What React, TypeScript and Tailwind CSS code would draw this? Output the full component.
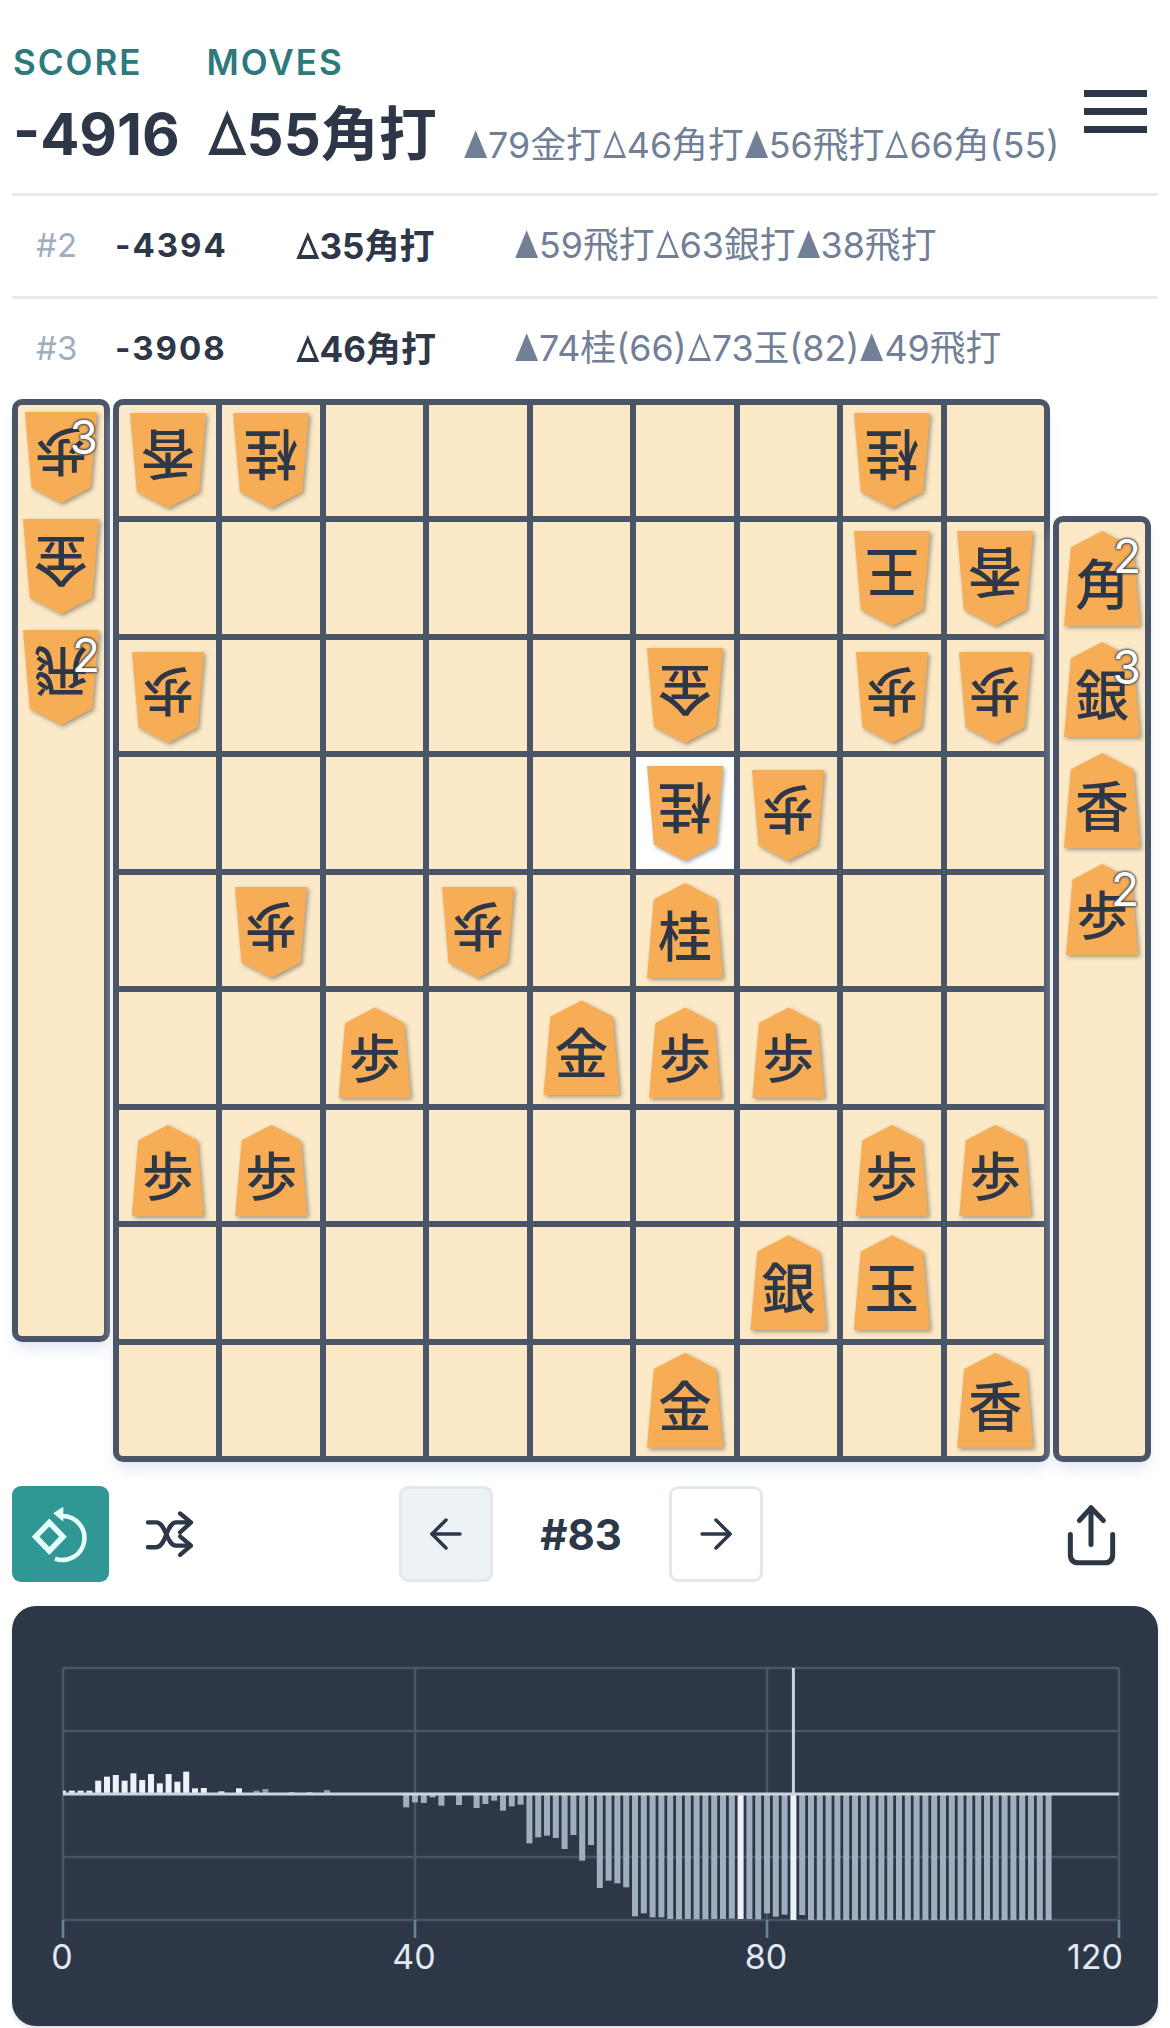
import React from 'react';
import { ArrowLeft, ArrowRight } from 'lucide-react';

const jp = '"Noto Sans CJK JP", sans-serif';

type Cell = { k: string; up?: boolean; hl?: boolean };

// board[row][col], up = the gote side (drawn upside down)
const board: Record<string, Cell> = {
  '0-0': { k: '香', up: true },
  '0-1': { k: '桂', up: true },
  '0-7': { k: '桂', up: true },
  '1-7': { k: '王', up: true },
  '1-8': { k: '香', up: true },
  '2-0': { k: '歩', up: true },
  '2-5': { k: '金', up: true },
  '2-7': { k: '歩', up: true },
  '2-8': { k: '歩', up: true },
  '3-5': { k: '桂', up: true, hl: true },
  '3-6': { k: '歩', up: true },
  '4-1': { k: '歩', up: true },
  '4-3': { k: '歩', up: true },
  '4-5': { k: '桂' },
  '5-2': { k: '歩' },
  '5-4': { k: '金' },
  '5-5': { k: '歩' },
  '5-6': { k: '歩' },
  '6-0': { k: '歩' },
  '6-1': { k: '歩' },
  '6-7': { k: '歩' },
  '6-8': { k: '歩' },
  '7-6': { k: '銀' },
  '7-7': { k: '玉' },
  '8-5': { k: '金' },
  '8-8': { k: '香' },
};

// the turn marks are narrower than a full CJK cell in the reference
const MoveText: React.FC<{ text: string }> = ({ text }) => (
  <>
    {text.split(/([▲△])/).map((part, i) =>
      part === '▲' || part === '△' ? (
        <span key={i} className="inline-block w-[0.7em] overflow-visible">
          <span className="inline-block origin-left scale-x-[0.7]">{part}</span>
        </span>
      ) : (
        <span key={i}>{part}</span>
      ),
    )}
  </>
);

const Piece: React.FC<{ k: string; up?: boolean; count?: number }> = ({ k, up, count }) => {
  const small = k === '歩';
  return (
    <div className={small ? 'relative w-[72px] h-[91px]' : 'relative w-[76px] h-[95px]'}>
      <div className="w-full h-full [filter:drop-shadow(2px_2px_2px_rgba(0,0,0,0.35))]">
        <div
          className={`w-full h-full bg-[#f6ad55] flex items-center justify-center pt-[7px] text-[#2d3748] font-medium [clip-path:polygon(50%_0,91%_17%,100%_100%,0_100%,9%_17%)] ${up ? 'rotate-180' : ''} ${small ? 'text-[52px]' : 'text-[54px]'} leading-none`}
          style={{ fontFamily: jp }}
        >
          {k}
        </div>
      </div>
      {count && (
        <div className="absolute top-[2px] right-[-1px] text-[46px] leading-none text-white font-['Inter'] [text-shadow:0_0_2px_#2d3748,0_0_3px_#2d3748,0_0_3px_#4a5568]">
          {count}
        </div>
      )}
    </div>
  );
};

const up = [10, 10, 10, 10, 40, 52, 57, 40, 62, 42, 60, 32, 60, 37, 67, 17, 18, 3, 8, 0, 17, 0, 10, 15, 1, 0, 6, 2, 6, 0, 12];
const down: Record<number, number> = {
  39: 40, 40: 25, 41: 27, 42: 10, 43: 35, 45: 33, 47: 42, 48: 30, 49: 20, 50: 50, 51: 37, 52: 32,
  53: 148, 54: 130, 55: 125, 56: 132, 57: 165, 58: 123, 59: 200, 60: 153, 61: 282, 62: 260, 63: 268, 64: 280,
  65: 367, 66: 358, 67: 370, 68: 370, 69: 375, 70: 376, 71: 375, 72: 376, 73: 376, 74: 375, 75: 375, 76: 374, 77: 375,
  78: 375, 79: 376, 80: 358, 81: 368, 82: 362, 83: 378, 84: 363,
};

const Chart = () => {
  const X = (i: number) => 51 + 8.8 * i;
  const zero = 188;
  const bars: React.ReactNode[] = [];
  up.forEach((h, i) => {
    if (h > 0)
      bars.push(
        <rect key={`u${i}`} x={i === 0 ? X(0) : X(i) - 3} y={zero - h / 3} width={i === 0 ? 3 : 6} height={h / 3} fill={i < 22 ? '#edf2f7' : '#8a99ad'} />,
      );
  });
  for (let i = 39; i <= 112; i++) {
    const h = i >= 85 ? 378 : down[i] ?? 0;
    if (h > 0)
      bars.push(
        <rect key={`d${i}`} x={X(i) - 3} y={zero} width={6} height={h / 3} fill={i === 77 || i === 83 ? '#edf2f7' : '#a0aec0'} />,
      );
  }
  return (
    <svg width="1146" height="420" viewBox="0 0 1146 420" className="block">
      {[62, 125, 251, 314].map((y) => (
        <line key={y} x1="51" x2="1107" y1={y} y2={y} stroke="#4a5568" strokeWidth="2.5" />
      ))}
      {[0, 40, 80, 120].map((t) => (
        <line key={t} x1={X(t)} x2={X(t)} y1="62" y2="332" stroke={'#4a5568'} strokeWidth="2.5" />
      ))}
      {[0, 40, 80, 120].map((t) => (
        <line key={`tick${t}`} x1={X(t)} x2={X(t)} y1="314" y2="332" stroke="#718096" strokeWidth="2.5" />
      ))}
      {bars}
      <line x1="51" x2="1107" y1={zero} y2={zero} stroke="#cbd5e0" strokeWidth="3" />
      <line x1={X(83)} x2={X(83)} y1="62" y2={zero} stroke="#cbd5e0" strokeWidth="3" />
      {[0, 40, 80, 120].map((t) => (
        <text
          key={`l${t}`}
          x={t === 120 ? X(t) + 4 : X(t) - 1}
          y="363"
          textAnchor={t === 120 ? 'end' : 'middle'}
          fill="#e2e8f0"
          fontSize="34"
          fontFamily="Inter, sans-serif"
        >
          {t}
        </text>
      ))}
    </svg>
  );
};

const Row: React.FC<{ n: string; score: string; move: string; pv: string }> = ({ n, score, move, pv }) => (
  <div className="mx-[12px] border-t-[3px] border-[#e4ebef] h-[103px] flex items-center font-['Inter',_'Noto_Sans_CJK_JP',_sans-serif]">
    <div className="w-[103px] pl-[24px] text-[33px] text-[#a0aec0]">{n}</div>
    <div className="w-[180px] text-[33px] tracking-[2px] font-bold text-[#2d3748]">{score}</div>
    <div className="w-[219px] text-[35px] font-bold text-[#2d3748]">
      <MoveText text={move} />
    </div>
    <div className="text-[35.8px] text-[#718096] whitespace-nowrap">
      <MoveText text={pv} />
    </div>
  </div>
);

export default function App() {
  return (
    <div className="w-[1170px] h-[2028px] bg-white overflow-hidden font-['Inter',_'Noto_Sans_CJK_JP',_sans-serif]">
      {/* header */}
      <div className="h-[193px] pl-[13px] pr-[23px] flex justify-between">
        <div>
          <div className="pt-[40px] flex gap-[64px] text-[35px] leading-[44px] font-semibold tracking-[2px] text-[#2c7a7b]">
            <span>SCORE</span>
            <span>MOVES</span>
          </div>
          <div className="mt-[12px] flex items-baseline text-[#2d3748]">
            <span className="text-[58px] leading-[76px] font-bold w-[193px]">-4916</span>
            <span className="text-[58px] leading-[76px] font-bold w-[257px]">
              <MoveText text="△55角打" />
            </span>
            <span className="relative top-[3px] text-[35.8px] font-normal text-[#718096] whitespace-nowrap">
              <MoveText text="▲79金打△46角打▲56飛打△66角(55)" />
            </span>
          </div>
        </div>
        <div className="pt-[90px] flex flex-col gap-[11px]">
          <div className="w-[63px] h-[7px] bg-[#2d3748]" />
          <div className="w-[63px] h-[7px] bg-[#2d3748]" />
          <div className="w-[63px] h-[7px] bg-[#2d3748]" />
        </div>
      </div>

      <Row n="#2" score="-4394" move="△35角打" pv="▲59飛打△63銀打▲38飛打" />
      <Row n="#3" score="-3908" move="△46角打" pv="▲74桂(66)△73玉(82)▲49飛打" />

      {/* board + hands */}
      <div className="h-[1063px] pl-[12px] flex">
        <div className="w-[98px] h-[943px] border-[6px] border-[#4a5568] rounded-[10px] bg-[#fbe9c7] flex flex-col items-center pt-[7px] gap-[16px] shadow-lg shadow-slate-200">
          <Piece k="歩" up count={3} />
          <Piece k="金" up />
          <Piece k="飛" up count={2} />
        </div>
        <div className="ml-[3px] w-[937px] h-[1063px] border-[6px] border-[#4a5568] rounded-[10px] bg-[#4a5568] overflow-hidden shadow-lg shadow-slate-200">
          <div className="w-full h-full grid grid-cols-9 grid-rows-9 gap-[6px]">
            {Array.from({ length: 81 }).map((_, i) => {
              const r = Math.floor(i / 9);
              const c = i % 9;
              const p = board[`${r}-${c}`];
              const offset = p?.k === '歩' ? (p.up ? 'pt-[4px]' : 'pt-[10px]') : '';
              return (
                <div key={i} className={`flex items-center justify-center ${offset} ${p?.hl ? 'bg-white' : 'bg-[#fbe9c7]'}`}>
                  {p && <Piece k={p.k} up={p.up} />}
                </div>
              );
            })}
          </div>
        </div>
        <div className="ml-[3px] self-end w-[98px] h-[946px] border-[6px] border-[#4a5568] rounded-[10px] bg-[#fbe9c7] flex flex-col items-center pt-[9px] gap-[16px] shadow-lg shadow-slate-200">
          <Piece k="角" count={2} />
          <Piece k="銀" count={3} />
          <Piece k="香" />
          <Piece k="歩" count={2} />
        </div>
      </div>

      {/* controls */}
      <div className="mt-[24px] h-[96px] pl-[12px] flex items-center">
        <div className="w-[97px] h-[96px] rounded-[9px] bg-[#319795]">
          <svg width="97" height="96" viewBox="0 0 97 96" fill="none">
            <path d="M37.3 36.5 L51 50.7 L37.3 65 L23.6 50.7 Z" stroke="#e6fffa" strokeWidth="5.5" strokeLinejoin="miter" />
            <path d="M50.5 30 A22 22 0 1 1 43 72.7" stroke="#e6fffa" strokeWidth="4.5" />
            <path d="M41.3 27.3 L51.3 20.7 L51.3 35.7 Z" fill="#e6fffa" />
          </svg>
        </div>
        <svg width="53" height="50" viewBox="400 90 160 150" fill="none" className="ml-[34px]">
          <g stroke="#2d3748" strokeWidth="13" strokeLinecap="round" strokeLinejoin="round">
            <path d="M415 130 H440 C470 130 470 200 500 200 H540" />
            <path d="M415 205 H440 C470 205 470 130 500 130 H540" />
            <path d="M512 103 L545 130 L512 160" />
            <path d="M512 172 L545 200 L512 228" />
          </g>
        </svg>
        <div className="ml-[203px] w-[94px] h-[96px] rounded-[9px] border-[3px] border-[#e2e8f0] bg-[#edf2f7] flex items-center justify-center text-[#2d3748]">
          <ArrowLeft size={48} strokeWidth={1.75} />
        </div>
        <div className="w-[176px] text-center text-[42px] font-bold text-[#2d3748]">#83</div>
        <div className="w-[94px] h-[96px] rounded-[9px] border-[3px] border-[#e2e8f0] bg-white flex items-center justify-center text-[#2d3748]">
          <ArrowRight size={48} strokeWidth={1.75} />
        </div>
        <svg width="60" height="67" viewBox="60 30 180 200" fill="none" className="ml-[298px]">
          <g stroke="#2d3748" strokeWidth="15" strokeLinecap="round" strokeLinejoin="round">
            <path d="M150 50 V160" />
            <path d="M115 88 L150 50 L187 88" />
            <path d="M88 130 V190 Q88 215 113 215 H190 Q215 215 215 190 V130" />
          </g>
        </svg>
      </div>

      {/* chart */}
      <div className="mt-[24px] mx-[12px] h-[420px] rounded-[24px] bg-[#2d3748] overflow-hidden shadow-md">
        <Chart />
      </div>
    </div>
  );
}
